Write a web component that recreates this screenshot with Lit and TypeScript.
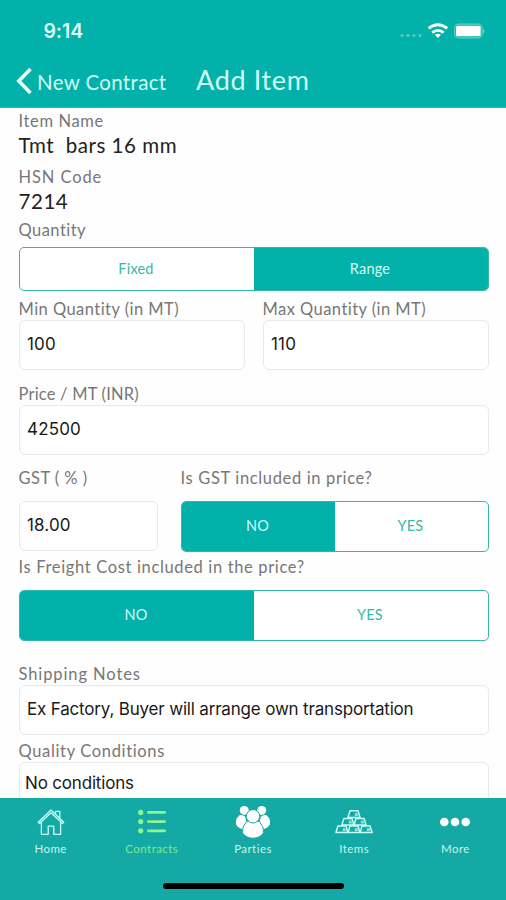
import { LitElement, html, css, svg } from "lit";
import { customElement, property } from "lit/decorators.js";

@customElement("segmented-control")
class SegmentedControl extends LitElement {
  @property({ attribute: false }) options: string[] = [];
  @property({ type: Number }) selected = 0;
  static styles = css`
    :host { display: flex; box-sizing: border-box; border: 1.5px solid #36b5a9; border-radius: 5px; overflow: hidden; background: #fff; }
    button { flex: 1 1 0; border: 0; padding: 0 1px 2px 0; margin: 0; background: transparent; color: #37b9a4; font: 14.5px Lato, sans-serif; letter-spacing: 0.2px; }
    .on { background: #02b1a9; color: #d4fbf5; }
  `;
  render() {
    return this.options.map((o, i) => html`<button class=${i === this.selected ? "on" : ""}>${o}</button>`);
  }
}

const home = svg`<svg width="28" height="28" viewBox="0 0 28 28" fill="none" stroke="#c5fff8" stroke-width="1.3" stroke-linejoin="round" stroke-linecap="round">
  <path d="M1.2 14.2 14 2l12.8 12.2-1.2 1.4L14 4.8 2.4 15.6zM18.6 6.2V3.4h4.2v6.6M4.4 14.2v12.2h6.8v-8.2h5.6v8.2h6.8V14.2"/></svg>`;
const list = svg`<svg width="28" height="26" viewBox="0 0 28 26" fill="#8ff58c">
  <circle cx="2.7" cy="3.4" r="2.6"/><circle cx="2.7" cy="12.6" r="2.6"/><circle cx="2.7" cy="21.8" r="2.6"/>
  <rect x="9" y="2" width="19" height="2.8" rx="1.4"/><rect x="9" y="11.2" width="19" height="2.8" rx="1.4"/><rect x="9" y="20.4" width="19" height="2.8" rx="1.4"/></svg>`;
const people = svg`<svg width="38" height="34" viewBox="0 0 38 34" fill="#fff">
  <circle cx="10.3" cy="5.4" r="4.5"/><circle cx="27.7" cy="5.4" r="4.5"/>
  <path d="M5 10.6q3-1.4 6.2 1.2l1.4 6-3.4 6.4q-4.6-.4-7-4.4-1.2-5.6 2.8-9.2zM33 10.6q-3-1.4-6.2 1.2l-1.4 6 3.4 6.4q4.6-.4 7-4.4 1.2-5.6-2.8-9.2z"/>
  <g stroke="#14a9a4" stroke-width="1"><path d="M12.6 16.6q6.4-3 12.8 0 4.8 5 4.2 11.2-3.6 5.4-10.6 5.4T8.4 27.8q-.6-6.2 4.2-11.2z"/><circle cx="19" cy="11.3" r="6.7"/></g></svg>`;
const bar = (x: number, y: number) => svg`<path d="M${x + 2} ${y}h8l2 6.6h-12z"/><path class="shade" d="M${x + 7} ${y + 2}h2.4l.9 3.2h-3.6z"/>`;
const bars = svg`<svg width="38" height="26" viewBox="0 0 38 26" fill="none" stroke="#c7fff6" stroke-width="1.5" stroke-linejoin="round">
  ${bar(13, 1.8)}${bar(6.9, 9.4)}${bar(19.1, 9.4)}${bar(0.9, 17)}${bar(13, 17)}${bar(25.1, 17)}</svg>`;
const dots = svg`<svg width="30" height="10" viewBox="0 0 30 10" fill="#fff"><circle cx="4.3" cy="5" r="4.3"/><circle cx="15" cy="5" r="4.3"/><circle cx="25.7" cy="5" r="4.3"/></svg>`;

@customElement("app-root")
class AppRoot extends LitElement {
  static styles = css`
    :host { display: flex; flex-direction: column; width: 506px; height: 900px; overflow: hidden; background: #fefefe; font-family: Lato, sans-serif; }
    svg { display: block; }
    header { flex: none; height: 108px; box-sizing: border-box; background: #02b1a9; border-bottom: 1px solid #25b9b0; color: #cffcf6; }
    .status { display: flex; align-items: center; height: 61px; padding: 0 20px 0 43.5px; box-sizing: border-box; }
    .time { flex: 1; font: 600 19.5px/24px Inter, sans-serif; letter-spacing: -0.1px; color: #dffff9; }
    .nav { display: flex; align-items: center; height: 40px; padding-left: 16px; }
    .back { display: flex; align-items: center; gap: 5px; width: 180px; font-size: 20.5px; white-space: nowrap; }
    .back span { letter-spacing: 0.35px; padding-top: 1px; }
    .title { font-size: 27px; line-height: 34px; letter-spacing: 0.65px; padding-bottom: 3px; }
    main { flex: 1; min-height: 0; overflow: hidden; padding: 0 17.5px 0 18.5px; display: flex; flex-direction: column; }
    .label { flex: none; height: 22px; line-height: 22px; font-size: 16.5px; letter-spacing: 0.45px; color: #777; white-space: pre; }
    .label.loose { letter-spacing: 0.65px; }
    .label.looser { letter-spacing: 0.9px; }
    .label.tight { letter-spacing: 0.2px; }
    .value { flex: none; height: 28px; line-height: 27px; font-size: 20.5px; letter-spacing: 0.55px; color: #222; white-space: pre; }
    .field { flex: none; height: 50px; box-sizing: border-box; border: 1.5px solid #e9e9e9; border-radius: 6px; padding: 0 7.5px; line-height: 47px; font-family: Inter, sans-serif; font-size: 17px; letter-spacing: 0.15px; color: #191919; background: #fff; white-space: nowrap; }
    .field.text { letter-spacing: -0.18px; }
    .row { display: flex; flex: none; gap: 18px; }
    .row > div { flex: 1; }
    .row > .gst { flex: 0 0 139px; margin-right: 5px; }
    .s44 { height: 44px; flex: none; }
    .s51 { height: 51px; flex: none; }
    .area { height: 60px; line-height: 40px; padding: 0 5.5px; }
    .g2 { margin-top: 2px; }
    .g3 { margin-top: 3px; }
    .g4 { margin-top: 4px; }
    .g5 { margin-top: 5px; }
    .g6 { margin-top: 6px; }
    .g7 { margin-top: 7px; }
    .g11 { margin-top: 11.5px; }
    .g12 { margin-top: 12px; }
    .g13 { margin-top: 13px; }
    .g22 { margin-top: 22px; }
    footer { flex: none; height: 102px; background: #14a9a4; display: flex; flex-direction: column; align-items: center; }
    .tabs { display: flex; width: 506px; height: 85px; }
    .tab { flex: 1; display: flex; flex-direction: column; align-items: center; font-size: 11.5px; letter-spacing: 0.45px; color: #c5f7f0; }
    .icon { height: 40px; margin-top: 4px; display: flex; align-items: center; justify-content: center; }
    .tab.active { color: #7ee98e; }
    .shade { stroke: none; fill: #8fddd5; }
    .indicator { width: 181px; height: 6px; border-radius: 3px; background: #000; }
  `;
  render() {
    const tabs = [["Home", home], ["Contracts", list], ["Parties", people], ["Items", bars], ["More", dots]] as const;
    return html`
      <header>
        <div class="status">
          <span class="time">9:14</span>
          <svg width="87" height="20" viewBox="0 0 87 20">
            <g fill="#5ccdc6"><circle cx="3" cy="14.5" r="1.5"/><circle cx="9" cy="14.5" r="1.5"/><circle cx="15" cy="14.5" r="1.5"/><circle cx="21" cy="14.5" r="1.5"/></g>
            <g fill="none" stroke="#fff" stroke-width="2.8"><path d="M29.6 7.4q9.3-7.4 18.6 0"/><path d="M33.2 11.6q5.7-4.4 11.4 0"/></g>
            <path d="M35.8 13.8q3.1-2.2 6.2 0L38.9 17z" fill="#fff"/>
            <rect x="55.6" y="3.2" width="27.5" height="13.6" rx="4" fill="none" stroke="#5fd0c8" stroke-width="1.2"/>
            <rect x="57" y="4.8" width="24.7" height="10.4" rx="1.5" fill="#fff"/><path d="M84.4 8q2.2 2 0 4.4z" fill="#9ce4df"/>
          </svg>
        </div>
        <div class="nav">
          <div class="back"><svg width="16" height="28" viewBox="0 0 16 28" fill="none" stroke="#e8fffc" stroke-width="3.6"><path d="M14.5 2 2.8 14l11.7 12"/></svg><span>New Contract</span></div>
          <div class="title">Add Item</div>
        </div>
      </header>
      <main>
        <div class="label loose g2">Item Name</div>
        <div class="value">Tmt  bars 16 mm</div>
        <div class="label looser g6">HSN Code</div>
        <div class="value">7214</div>
        <div class="label g3">Quantity</div>
        <segmented-control class="s44 g6" .options=${["Fixed", "Range"]} .selected=${1}></segmented-control>
        <div class="row g7">
          <div><div class="label">Min Quantity (in MT)</div><div class="field">100</div></div>
          <div><div class="label">Max Quantity (in MT)</div><div class="field">110</div></div>
        </div>
        <div class="label tight g13">Price / MT (INR)</div>
        <div class="field">42500</div>
        <div class="row g12">
          <div class="gst"><div class="label">GST ( % )</div><div class="field g12">18.00</div></div>
          <div><div class="label loose">Is GST included in price?</div><segmented-control class="s51 g12" .options=${["NO", "YES"]}></segmented-control></div>
        </div>
        <div class="label loose g4">Is Freight Cost included in the price?</div>
        <segmented-control class="s51 g11" .options=${["NO", "YES"]}></segmented-control>
        <div class="label looser g22">Shipping Notes</div>
        <div class="field text">Ex Factory, Buyer will arrange own transportation</div>
        <div class="label loose g5">Quality Conditions</div>
        <div class="field text area">No conditions</div>
      </main>
      <footer>
        <div class="tabs">${tabs.map(([name, icon], i) => html`<div class="tab ${i === 1 ? "active" : ""}"><div class="icon">${icon}</div>${name}</div>`)}</div>
        <div class="indicator"></div>
      </footer>`;
  }
}
